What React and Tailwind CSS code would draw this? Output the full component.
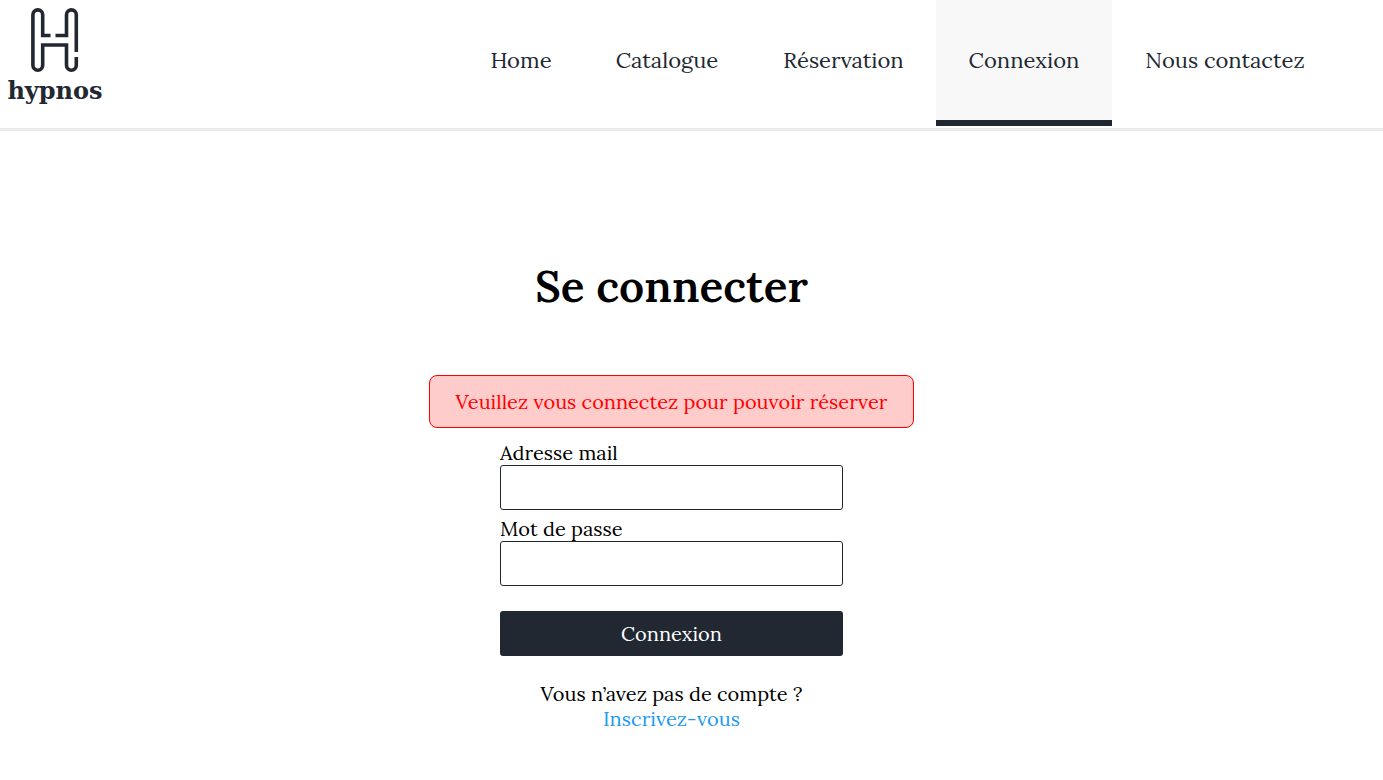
const links = [
  { label: "Home", width: "w-[124px]" },
  { label: "Catalogue", width: "w-[168px]" },
  { label: "Réservation", width: "w-[185px]" },
  { label: "Connexion", width: "w-[176px]", active: true },
  { label: "Nous contactez", width: "w-[226px]" },
];

function Logo() {
  return (
    <a href="#" className="flex w-[110px] flex-col items-center text-[#222831]">
      <svg
        viewBox="0 0 110 78"
        className="h-[78px] w-[110px]"
        fill="none"
        stroke="currentColor"
        strokeWidth="3.6"
        aria-hidden="true"
      >
        <path d="M50.5 35.5H42.7V14.8a4.9 4.9 0 0 0-9.8 0V65.3a4.9 4.9 0 0 0 9.8 0V45H66.5V65.3a4.9 4.9 0 0 0 9.8 0V57" />
        <path d="M55.5 35.5H66.5V14.8a4.9 4.9 0 0 1 9.8 0V52" />
      </svg>
      <span className="font-['DejaVu_Serif',serif] text-[24px] leading-[26px] font-bold">hypnos</span>
    </a>
  );
}

function Field({ id, label, type }) {
  return (
    <div className="flex flex-col">
      <label htmlFor={id} className="leading-[25px]">
        {label}
      </label>
      <input
        id={id}
        type={type}
        className="h-[45px] w-full rounded-[3px] border border-[#222831] bg-white px-3 outline-none"
      />
    </div>
  );
}

export default function App() {
  return (
    <div className="min-h-screen bg-white font-['Lora','Liberation_Serif',serif] text-[20px] leading-[25px] text-black">
      <header className="flex items-start justify-between border-b-3 border-[#ebebeb] pb-[2px]">
        <Logo />
        <nav className="pr-[45px]">
          <ul className="flex">
            {links.map(({ label, width, active }) => (
              <li key={label} className={width}>
                <a
                  href="#"
                  aria-current={active ? "page" : undefined}
                  className={`flex h-[126px] items-center justify-center border-b-6 text-[22px] whitespace-nowrap text-[#222831] ${
                    active ? "border-[#222831] bg-[#f8f8f8]" : "border-transparent"
                  }`}
                >
                  {label}
                </a>
              </li>
            ))}
          </ul>
        </nav>
      </header>

      <main className="flex flex-col items-center pt-[123px] pr-10 pb-12">
        <h1 className="text-[44px] leading-[64px] font-semibold">Se connecter</h1>
        <p
          role="alert"
          className="mt-[57px] flex h-[53px] w-full max-w-[485px] items-center justify-center rounded-lg border border-[#ff0000] bg-[#ffcccc] text-[#ff0000]"
        >
          Veuillez vous connectez pour pouvoir réserver
        </p>
        <form className="mt-3 flex w-full max-w-[343px] flex-col gap-[6px]" onSubmit={(e) => e.preventDefault()}>
          <Field id="email" label="Adresse mail" type="email" />
          <Field id="password" label="Mot de passe" type="password" />
          <button type="submit" className="mt-[19px] h-[45px] rounded-[3px] bg-[#222831] text-white">
            Connexion
          </button>
        </form>
        <p className="mt-[25px]">Vous n’avez pas de compte ?</p>
        <a href="#" className="text-[#1e9bf0]">
          Inscrivez-vous
        </a>
      </main>
    </div>
  );
}
